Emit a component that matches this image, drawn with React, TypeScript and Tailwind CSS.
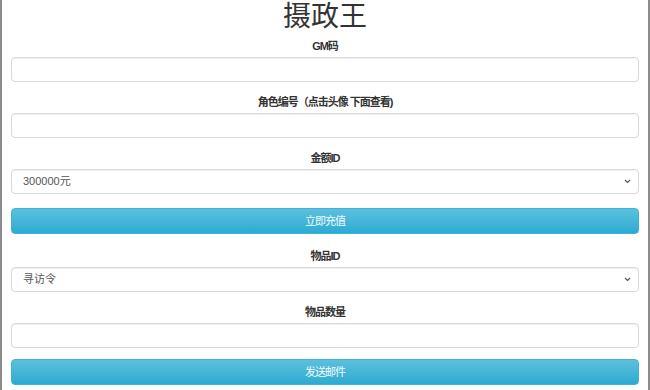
const font = { fontFamily: '"Liberation Sans", "Noto Sans CJK SC", sans-serif' };

const Label = ({ text }: { text: string }) => (
  <div className="h-[20px] leading-[20px] text-center text-[11px] font-bold tracking-[-1px] text-[#333] mb-[1px]">{text}</div>
);

const Input = () => (
  <div className="h-[25px] rounded-[4px] border border-[#d9d9d9] bg-white shadow-[inset_0_1px_1px_rgba(0,0,0,0.06)]" />
);

const Select = ({ value }: { value: string }) => (
  <div className="h-[25px] rounded-[4px] border border-[#d9d9d9] bg-white flex items-center justify-between pl-[11px] pr-[7px] shadow-[inset_0_1px_1px_rgba(0,0,0,0.06)]">
    <span className="text-[11px] text-[#555]">{value}</span>
    <svg width="7" height="5" viewBox="0 0 7 5" fill="none">
      <path d="M1 1 L3.5 3.5 L6 1" stroke="#555" strokeWidth="1.2" />
    </svg>
  </div>
);

const Button = ({ text }: { text: string }) => (
  <div className="h-[26px] rounded-[4px] border border-[#3fb3d6] bg-gradient-to-b from-[#5bc0de] to-[#2aabd2] flex items-center justify-center text-[11px] tracking-[-1px] text-[#f4fbfd]">
    {text}
  </div>
);

export default function App() {
  return (
    <div style={font} className="w-[650px] h-[390px] bg-white border-l-2 border-r-2 border-[#8c8c8c] px-[9px] overflow-hidden">
      <div className="h-[36px] leading-[34px] text-center text-[28px] text-[#333]">摄政王</div>
      <Label text="GM码" />
      <Input />
      <div className="h-[10px]" />
      <Label text="角色编号（点击头像 下面查看)" />
      <Input />
      <div className="h-[10px]" />
      <Label text="金额ID" />
      <Select value="300000元" />
      <div className="h-[14px]" />
      <Button text="立即充值" />
      <div className="h-[12px]" />
      <Label text="物品ID" />
      <Select value="寻访令" />
      <div className="h-[10px]" />
      <Label text="物品数量" />
      <Input />
      <div className="h-[11px]" />
      <Button text="发送邮件" />
    </div>
  );
}
